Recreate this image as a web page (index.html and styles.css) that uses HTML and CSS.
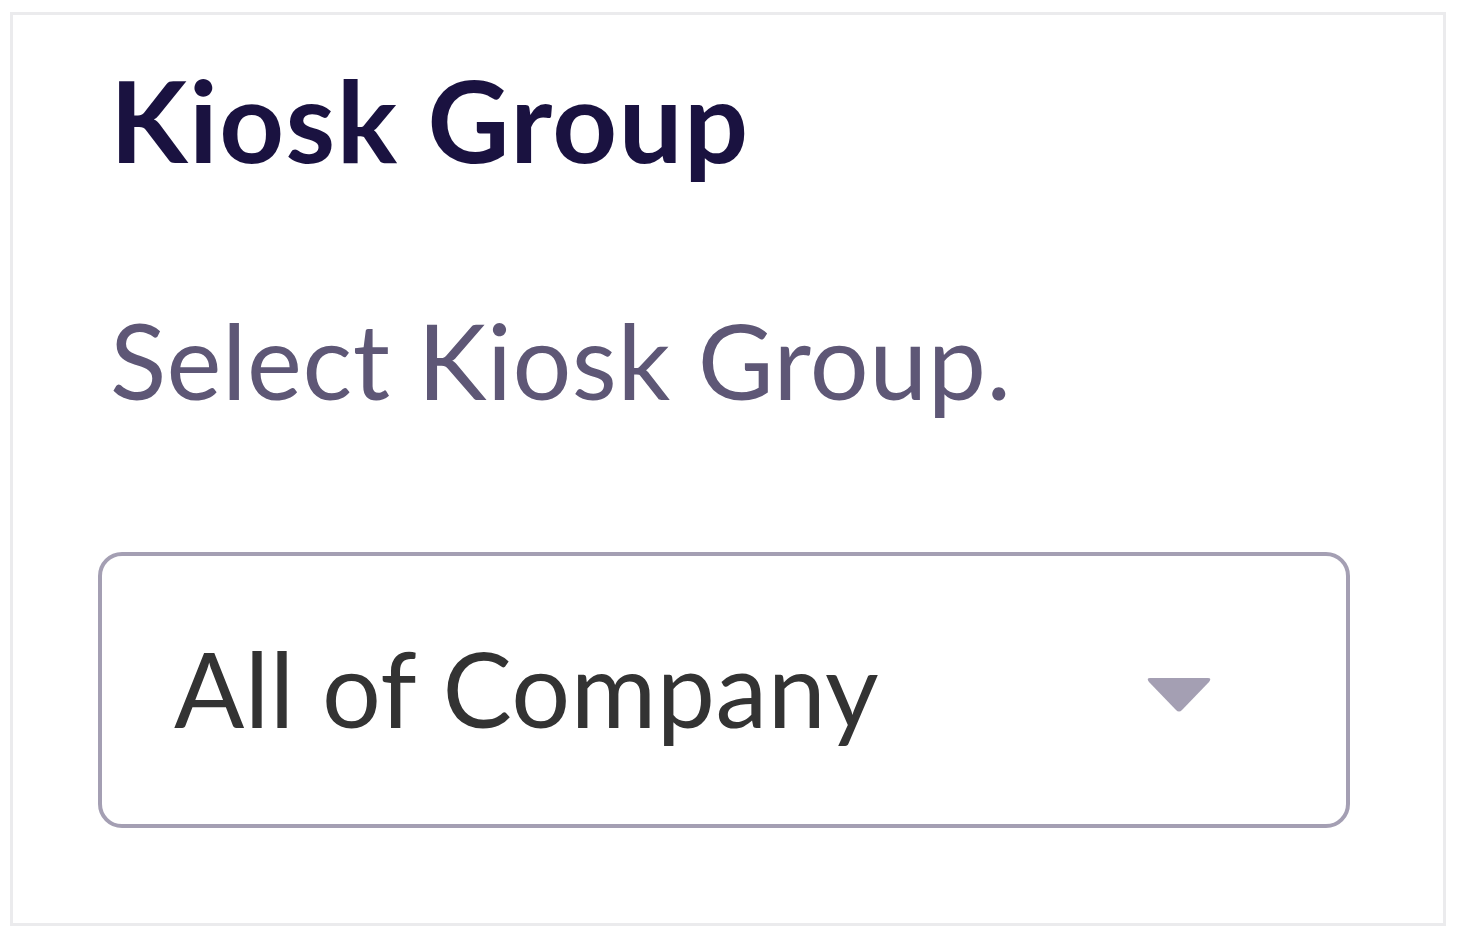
FILE: index.html
```html
<!DOCTYPE html>
<html lang="en">
<head>
<meta charset="utf-8">
<title>Kiosk Group</title>
<link rel="stylesheet" href="styles.css">
</head>
<body>
<div class="card">
  <h1 class="title">Kiosk Group</h1>
  <p class="subtitle">Select Kiosk Group.</p>
  <div class="select">
    <span class="select-value">All of Company</span>
    <svg class="caret" width="66" height="38" viewBox="0 0 66 38" aria-hidden="true">
      <path d="M4 2 H62 Q66 2 63 6 L36 34 Q33 37 30 34 L3 6 Q0 2 4 2 Z" fill="#a49fb3"/>
    </svg>
  </div>
</div>
</body>
</html>
```

FILE: styles.css
```css
html, body {
  margin: 0;
  padding: 0;
  background: #ffffff;
}

body {
  font-family: Lato, "Open Sans", sans-serif;
}

.card {
  box-sizing: border-box;
  margin: 12px 0 0 10px;
  width: 1436px;
  height: 914px;
  border: 3px solid #ebebed;
  background: #ffffff;
  padding: 37px 93px 0 85px;
  display: flex;
  flex-direction: column;
}

.title {
  margin: 0 0 0 12px;
  font-size: 113px;
  line-height: 1.2;
  font-weight: 700;
  letter-spacing: 1.5px;
  color: #1a1240;
}

.subtitle {
  margin: 110px 0 0 12px;
  font-size: 104px;
  line-height: 1.2;
  font-weight: 400;
  letter-spacing: 0.5px;
  color: #5e5776;
}

.select {
  box-sizing: border-box;
  margin-top: 130px;
  height: 276px;
  border: 4px solid #a49fb3;
  border-radius: 24px;
  display: flex;
  align-items: center;
  justify-content: space-between;
  padding: 0 134px 0 72px;
}

.select-value {
  font-size: 104px;
  line-height: 1.2;
  letter-spacing: 0.5px;
  color: #333333;
  margin-top: -4px;
}

.caret {
  display: block;
  margin-top: 10px;
}
```
